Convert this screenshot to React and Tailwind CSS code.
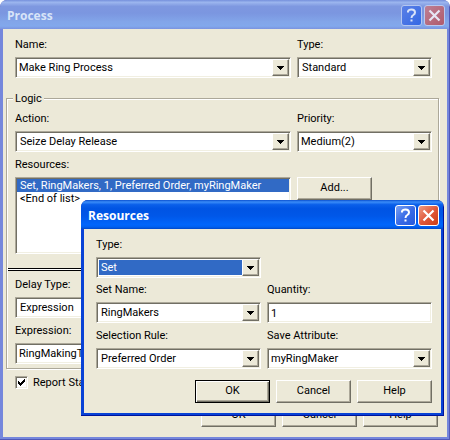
import React from "react";

const sunken =
  "border border-t-[#aca899] border-l-[#aca899] border-b-white border-r-white bg-white shadow-[inset_1px_1px_0_#716f64,inset_-1px_-1px_0_#f1efe2]";
const raised =
  "bg-[#ece9d8] border border-t-white border-l-white border-b-[#716f64] border-r-[#716f64] shadow-[inset_-1px_-1px_0_#aca899]";

function Arrow() {
  return (
    <svg width="7" height="4" viewBox="0 0 7 4" shapeRendering="crispEdges" aria-hidden="true">
      <path d="M0 0h7v1H0zM1 1h5v1H1zM2 2h3v1H2zM3 3h1v1H3z" fill="#000" />
    </svg>
  );
}

function Field({ id, label, children }) {
  return (
    <div className="flex min-w-0 flex-col gap-1.5">
      <label htmlFor={id} className="block leading-[13px]">{label}</label>
      {children}
    </div>
  );
}

function SelectField({ id, label, value, focused }) {
  return (
    <Field id={id} label={label}>
      <div className={`relative h-[21px] p-px ${sunken}`}>
        <select
          id={id}
          defaultValue={value}
          className={`block h-full w-full appearance-none pt-px pr-5 outline-none ${
            focused ? "border border-white bg-[#316ac5] pl-[2px] leading-[14px] text-white" : "bg-white pl-[3px] leading-[16px]"
          }`}
        >
          <option>{value}</option>
        </select>
        <span className={`pointer-events-none absolute top-px right-px bottom-px flex w-[17px] items-center justify-center ${raised}`}>
          <Arrow />
        </span>
      </div>
    </Field>
  );
}

function ComboField({ id, label, value }) {
  return (
    <Field id={id} label={label}>
      <div className={`flex h-[21px] p-px ${sunken}`}>
        <input id={id} defaultValue={value} className="min-w-0 flex-1 bg-transparent pt-px pl-0.5 outline-none" />
        <button type="button" aria-label={`Open ${label}`} className={`flex w-[17px] items-center justify-center ${raised}`}>
          <Arrow />
        </button>
      </div>
    </Field>
  );
}

function PushButton({ children, primary }) {
  return (
    <button
      type="button"
      className={
        primary
          ? "h-[23px] w-[75px] border border-black bg-[#ece9d8] shadow-[inset_1px_1px_0_#fff,inset_-1px_-1px_0_#716f64,inset_-2px_-2px_0_#aca899]"
          : `h-[23px] w-[75px] ${raised}`
      }
    >
      {children}
    </button>
  );
}

function CaptionButtons({ active }) {
  return (
    <div className="flex gap-0.5">
      <button
        type="button"
        aria-label="Help"
        className={`flex size-[21px] items-center justify-center rounded-[3px] border ${
          active
            ? "border-white bg-linear-to-br from-[#7aa0f2] via-[#3a6ce6] to-[#2459dc]"
            : "border-[#b4c6f0] bg-linear-to-br from-[#5a80e6] to-[#3468e4]"
        }`}
      >
        <svg width="11" height="15" viewBox="0 0 11 15" fill="none" aria-hidden="true">
          <path d="M2 4.5V3.5Q2.500 1.500 5.500 1.500Q9 1.500 9 4.500Q9 6 7.300 7Q5.500 8 5.500 10" stroke={active ? "#fff" : "#d9e3f8"} strokeWidth="2" />
          <path d="M4.500 11.500h2v2h-2z" fill={active ? "#fff" : "#d9e3f8"} />
        </svg>
      </button>
      <button
        type="button"
        aria-label="Close"
        className={`flex size-[21px] items-center justify-center rounded-[3px] border ${
          active
            ? "border-white bg-linear-to-br from-[#ee9a82] via-[#e0583a] to-[#cc3c10]"
            : "border-[#b9c9ef] bg-linear-to-br from-[#bd7f94] to-[#b05a6c]"
        }`}
      >
        <svg width="13" height="13" viewBox="0 0 13 13" fill="none" aria-hidden="true">
          <path d="M1.500 1.500l10 10M11.500 1.500l-10 10" stroke={active ? "#fff" : "#e6e6f4"} strokeWidth="2.200" />
        </svg>
      </button>
    </div>
  );
}

function Window({ title, active, children }) {
  return (
    <section
      aria-label={title}
      className={`flex flex-col overflow-hidden rounded-t-[7px] pr-px pb-px ${active ? "bg-[#00139c]" : "bg-[#5058b8]"}`}
    >
      <header
        className={`flex h-[29px] shrink-0 items-center justify-between pt-0.5 pr-1 pl-[7px] ${
          active
            ? "bg-[linear-gradient(#0a50d0_0%,#3a8cf8_7%,#0a5fea_16%,#0054e3_30%,#0057e8_55%,#0066fc_85%,#0060f0_93%,#0048c8_100%)]"
            : "bg-[linear-gradient(#7590dc_0%,#9cb6ee_8%,#7e98e0_22%,#7b96e0_45%,#82a5e9_75%,#82a8ec_90%,#7a93df_100%)]"
        }`}
      >
        <h1 className={`font-['Open_Sans',sans-serif] text-[12px] leading-[18px] font-bold ${active ? "text-white" : "text-[#d8e4f8]"}`}>
          {title}
        </h1>
        <CaptionButtons active={active} />
      </header>
      <div
        className={`flex-1 border-r-2 border-b-2 border-l-[3px] bg-[#ece9d8] ${
          active ? "border-[#0842d6]" : "border-[#7587dc]"
        }`}
      >
        {children}
      </div>
    </section>
  );
}

function ProcessWindow() {
  return (
    <Window title="Process">
      <form className="pt-[9px] pb-[10px]">
        <div className="grid grid-cols-[1fr_135px] gap-1.5 pr-[15px] pl-3">
          <ComboField id="name" label="Name:" value="Make Ring Process" />
          <SelectField id="type" label="Type:" value="Standard" />
        </div>
        <fieldset className="mt-3.5 mr-2 ml-[3px] min-w-0 border border-[#aca899] pt-[7px] pb-1 shadow-[1px_1px_0_#fff,inset_1px_1px_0_#fff]">
          <legend className="ml-1.5 bg-[#ece9d8] px-0.5 leading-[13px]">Logic</legend>
          <div className="grid grid-cols-[1fr_135px] gap-1.5 pr-1.5 pl-2">
            <SelectField id="action" label="Action:" value="Seize Delay Release" />
            <ComboField id="priority" label="Priority:" value="Medium(2)" />
            <Field id="resources" label="Resources:">
              <ul id="resources" className={`h-[77px] p-px leading-[13px] ${sunken}`}>
                <li className="bg-[#316ac5] pl-[3px] text-white">Set, RingMakers, 1, Preferred Order, myRingMaker</li>
                <li className="pl-[3px]">&lt;End of list&gt;</li>
              </ul>
            </Field>
            <div className="pt-[19px]">
              <PushButton>Add...</PushButton>
            </div>
          </div>
          <hr className="mx-px mt-3.5 h-[3px] border-y border-black bg-white" />
          <div className="mt-[7px] grid grid-cols-[1fr_135px] gap-1.5 pr-1.5 pl-2">
            <div className="col-start-1">
              <SelectField id="delay" label="Delay Type:" value="Expression" />
            </div>
            <div className="col-start-1">
              <ComboField id="expression" label="Expression:" value="RingMakingTime" />
            </div>
          </div>
        </fieldset>
        <label className="mt-[7px] ml-3 flex w-fit items-center gap-[5px] leading-[13px]">
          <span className="relative block size-[13px]">
            <input type="checkbox" defaultChecked className={`peer block size-[13px] appearance-none ${sunken}`} />
            <svg className="pointer-events-none absolute top-[3px] left-[3px] hidden peer-checked:block" width="7" height="7" viewBox="0 0 7 7" shapeRendering="crispEdges" aria-hidden="true">
              <path d="M0 2h1v3H0zM1 3h1v3H1zM2 4h1v3H2zM3 3h1v3H3zM4 2h1v3H4zM5 1h1v3H5zM6 0h1v3H6z" fill="#000" />
            </svg>
          </span>
          Report Statistics
        </label>
        <div className="mt-[15px] flex justify-end gap-1.5 pr-[9px]">
          <PushButton>OK</PushButton>
          <PushButton>Cancel</PushButton>
          <PushButton>Help</PushButton>
        </div>
      </form>
    </Window>
  );
}

function ResourcesWindow() {
  return (
    <Window title="Resources" active>
      <form className="pt-[9px] pr-[9px] pb-2.5 pl-3">
        <div className="w-[165px]">
          <SelectField id="res-type" label="Type:" value="Set" focused />
        </div>
        <div className="mt-[5px] grid grid-cols-[165px_1fr] gap-1.5">
          <SelectField id="set-name" label="Set Name:" value="RingMakers" />
          <Field id="quantity" label="Quantity:">
            <input id="quantity" defaultValue="1" className={`h-[21px] w-full pt-px pl-[3px] outline-none ${sunken}`} />
          </Field>
          <SelectField id="rule" label="Selection Rule:" value="Preferred Order" />
          <ComboField id="attribute" label="Save Attribute:" value="myRingMaker" />
        </div>
        <div className="mt-[11px] flex justify-end gap-1.5">
          <PushButton primary>OK</PushButton>
          <PushButton>Cancel</PushButton>
          <PushButton>Help</PushButton>
        </div>
      </form>
    </Window>
  );
}

export default function App() {
  return (
    <main className="relative bg-white font-[Roboto,Arial,sans-serif] text-[11px] text-black">
      <ProcessWindow />
      <div className="absolute top-[200px] right-1.5 left-[81px]">
        <ResourcesWindow />
      </div>
    </main>
  );
}
